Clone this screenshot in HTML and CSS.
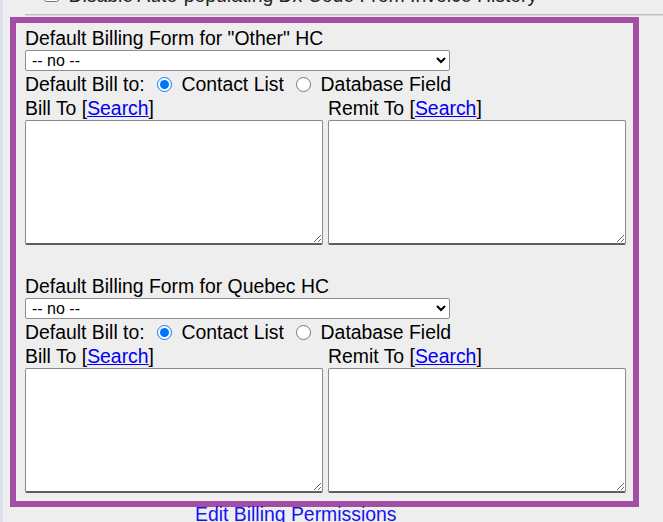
FILE: index.html
```html
<!DOCTYPE html>
<html>
<head>
<meta charset="utf-8">
<link rel="stylesheet" href="styles.css">
</head>
<body>
<div class="page">
  <div class="top-opt"><input type="checkbox" class="chk"> Disable Auto-populating Dx Code From Invoice History</div>
  <div class="rule"></div>
  <div class="box">
    <div class="section">
      <div class="title">Default Billing Form for "Other" HC</div>
      <select class="sel"><option>-- no --</option></select>
      <div class="billto">Default Bill to: <label><input type="radio" name="b1" checked> Contact List</label> <label><input type="radio" name="b1"> Database Field</label></div>
      <div class="grid">
        <div class="col"><div class="lbl">Bill To [<a href="#">Search</a>]</div><textarea class="ta"></textarea></div>
        <div class="col"><div class="lbl">Remit To [<a href="#">Search</a>]</div><textarea class="ta"></textarea></div>
      </div>
    </div>
    <div class="section second">
      <div class="title">Default Billing Form for Quebec HC</div>
      <select class="sel"><option>-- no --</option></select>
      <div class="billto">Default Bill to: <label><input type="radio" name="b2" checked> Contact List</label> <label><input type="radio" name="b2"> Database Field</label></div>
      <div class="grid">
        <div class="col"><div class="lbl">Bill To [<a href="#">Search</a>]</div><textarea class="ta"></textarea></div>
        <div class="col"><div class="lbl">Remit To [<a href="#">Search</a>]</div><textarea class="ta"></textarea></div>
      </div>
    </div>
  </div>
  <a class="perm" href="#">Edit Billing Permissions</a>
</div>
</body>
</html>
```
FILE: styles.css
```css
html, body {
  margin: 0;
  padding: 0;
  overflow: hidden;
  background: #eeeeee;
}
body {
  font-family: "Liberation Sans", Arial, sans-serif;
  font-size: 19.4px;
  color: #000;
}
.page {
  border-left: 3px solid #dce3ee;
  min-height: 522px;
  box-sizing: border-box;
}
.top-opt {
  margin-top: -16px;
  height: 22px;
  line-height: 22px;
  padding-left: 41px;
  white-space: nowrap;
  color: #222;
}
.chk {
  width: 15px;
  height: 15px;
  margin: 0 4px 0 0;
  vertical-align: baseline;
}
.rule {
  margin: 8px 0 0 22px;
  border-top: 1px solid #bcbcbc;
  border-bottom: 1px solid #dadada;
}
.box {
  margin: 1px 0 0 7px;
  width: 629px;
  box-sizing: border-box;
  border: 6px solid #a44da5;
  padding: 4px 7px 8px 9px;
  background: #eeeeee;
}
.section.second {
  margin-top: 30px;
}
.title {
  line-height: 22px;
  height: 22px;
  white-space: nowrap;
}
.sel {
  display: block;
  margin-top: 1px;
  width: 425px;
  height: 21px;
  font-family: "Liberation Sans", Arial, sans-serif;
  font-size: 16px;
  padding: 0 6px 0 2px;
  border: 1px solid #8f8f8f;
  border-radius: 2px;
  background: #fff;
  color: #000;
}
.billto {
  margin-top: 2px;
  line-height: 22px;
  height: 22px;
  white-space: nowrap;
}
.billto input {
  width: 15px;
  height: 15px;
  margin: 0 4px 0 7px;
  vertical-align: -1px;
}
.grid {
  display: grid;
  grid-template-columns: 298px 298px;
  column-gap: 5px;
  margin-top: 2px;
}
.lbl {
  line-height: 22px;
  height: 22px;
  white-space: nowrap;
}
.lbl a {
  color: #0000ee;
  text-decoration: underline;
}
.ta {
  display: block;
  margin-top: 1px;
  width: 298px;
  height: 125px;
  box-sizing: border-box;
  border: 1px solid #8a8a8a;
  border-bottom: 2px solid #5e5e5e;
  border-radius: 2px;
  background: #fff;
  resize: both;
}
.perm {
  display: block;
  margin: -4px 0 0 192px;
  line-height: 22px;
  color: #1515f0;
  text-decoration: none;
  white-space: nowrap;
}
```
